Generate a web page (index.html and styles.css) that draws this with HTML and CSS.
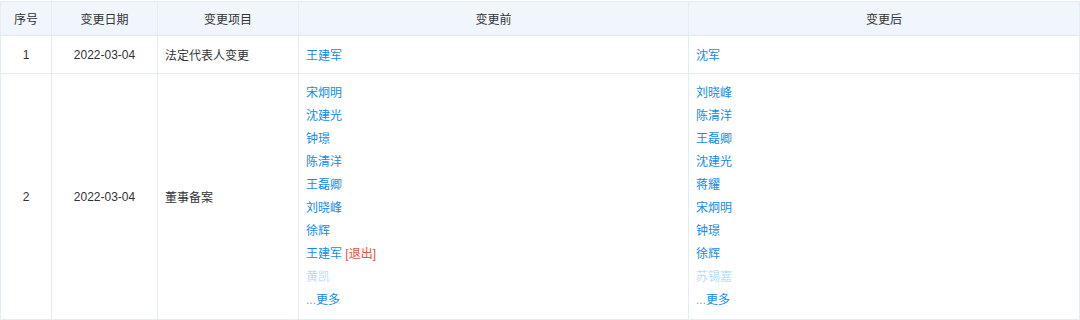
FILE: index.html
```html
<!DOCTYPE html>
<html lang="zh-CN">
<head>
<meta charset="utf-8">
<link rel="stylesheet" href="styles.css">
</head>
<body>
<table class="change-table">
  <colgroup>
    <col class="c-no"><col class="c-date"><col class="c-item"><col class="c-before"><col class="c-after">
  </colgroup>
  <thead>
    <tr>
      <th>序号</th>
      <th>变更日期</th>
      <th>变更项目</th>
      <th>变更前</th>
      <th>变更后</th>
    </tr>
  </thead>
  <tbody>
    <tr class="row-single">
      <td class="center">1</td>
      <td class="center">2022-03-04</td>
      <td>法定代表人变更</td>
      <td><span class="link">王建军</span></td>
      <td><span class="link">沈军</span></td>
    </tr>
    <tr class="row-multi">
      <td class="center">2</td>
      <td class="center">2022-03-04</td>
      <td>董事备案</td>
      <td>
        <div class="names">
          <span class="link">宋炯明</span>
          <span class="link">沈建光</span>
          <span class="link">钟璟</span>
          <span class="link">陈清洋</span>
          <span class="link">王磊卿</span>
          <span class="link">刘晓峰</span>
          <span class="link">徐辉</span>
          <span><span class="link">王建军</span> <span class="quit">[退出]</span></span>
          <span class="link faded">黄凯</span>
          <span class="more"><span class="dots">...</span><span class="link">更多</span></span>
        </div>
      </td>
      <td>
        <div class="names">
          <span class="link">刘晓峰</span>
          <span class="link">陈清洋</span>
          <span class="link">王磊卿</span>
          <span class="link">沈建光</span>
          <span class="link">蒋耀</span>
          <span class="link">宋炯明</span>
          <span class="link">钟璟</span>
          <span class="link">徐辉</span>
          <span class="link faded">苏锡嘉</span>
          <span class="more"><span class="dots">...</span><span class="link">更多</span></span>
        </div>
      </td>
    </tr>
  </tbody>
</table>
</body>
</html>
```

FILE: styles.css
```css
html, body {
  margin: 0;
  padding: 0;
  background: #fff;
}
body {
  padding-top: 1px;
  font-family: "Liberation Sans", "Noto Sans CJK SC", sans-serif;
  font-size: 12px;
  color: #333;
}
.change-table {
  border-collapse: collapse;
  table-layout: fixed;
  width: 1079px;
}
.c-no { width: 51px; }
.c-date { width: 106px; }
.c-item { width: 141px; }
.c-before { width: 390px; }
.c-after { width: 391px; }
.change-table th,
.change-table td {
  border: 1px solid #e4ecf4;
  padding: 0 7px;
  text-align: left;
  vertical-align: middle;
}
.change-table th {
  background: #f0f6fc;
  height: 33px;
  font-weight: normal;
  text-align: center;
  color: #333;
}
.change-table td.center {
  text-align: center;
}
.row-single td {
  height: 37px;
}
.row-multi td {
  height: 245px;
  padding-top: 0;
  padding-bottom: 0;
}
.names {
  display: flex;
  flex-direction: column;
  line-height: 23px;
}
.link {
  color: #128bed;
}
.faded {
  opacity: 0.3;
}
.quit {
  color: #f04e3c;
}
.dots {
  color: #999;
}
```
